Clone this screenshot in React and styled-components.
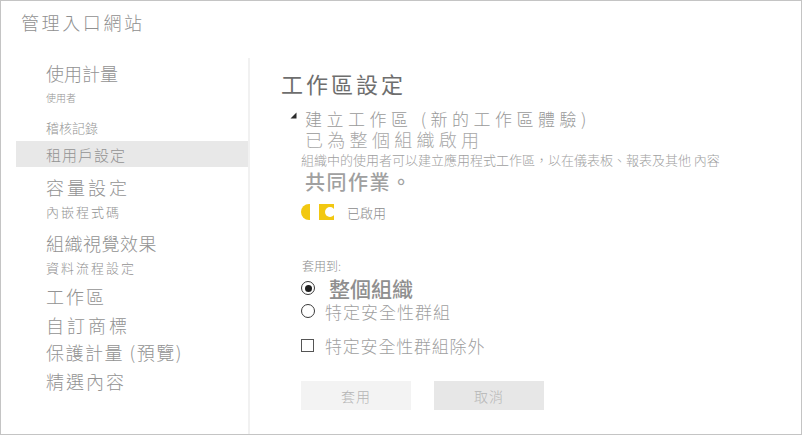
import React from "react";
import styled, { createGlobalStyle } from "styled-components";

const Global = createGlobalStyle`
  html, body { margin: 0; padding: 0; background: #fff; }
  body { font-family: "Noto Sans CJK TC", "Noto Sans", sans-serif; }
  * { box-sizing: border-box; }
`;

const Frame = styled.div`
  width: 802px;
  height: 435px;
  border: 1px solid #c4c4c4;
  display: flex;
  flex-direction: column;
  background: #fff;
  overflow: hidden;
`;

const Header = styled.header`
  height: 57px;
  padding: 8px 0 0 20px;
  font-size: 18px;
  line-height: 26px;
  letter-spacing: 2.6px;
  color: #909090;
  font-weight: 300;
`;

const Body = styled.div`
  flex: 1;
  display: flex;
  min-height: 0;
`;

const Sidebar = styled.nav`
  width: 249px;
  flex: none;
  border-right: 2px solid #f1f1f1;
  padding-left: 15px;
  display: flex;
  flex-direction: column;
`;

const NavItem = styled.div`
  height: ${(p) => p.$h}px;
  margin-top: ${(p) => p.$mt || 0}px;
  display: flex;
  align-items: center;
  padding-left: 30px;
  font-size: ${(p) => p.$size}px;
  letter-spacing: ${(p) => p.$ls || 0}px;
  color: #939393;
  white-space: nowrap;
  font-weight: 300;
  background: ${(p) => (p.$active ? "#e8e8e8" : "transparent")};
`;

const Main = styled.main`
  flex: 1;
  padding-left: 31px;
  display: flex;
  flex-direction: column;
  white-space: nowrap;
`;

const Heading = styled.h1`
  margin: 11px 0 0;
  font-size: 22px;
  line-height: 28px;
  letter-spacing: 3px;
  font-weight: 400;
  color: #6e6e6e;
`;

const SectionRow = styled.div`
  margin-top: 10px;
  display: flex;
  align-items: flex-start;
`;

const Caret = styled.svg`
  width: 24px;
  flex: none;
  margin-top: 5px;
  padding-left: 1px;
`;

const Line = styled.div`
  padding-left: ${(p) => p.$indent || 0}px;
  margin-top: ${(p) => p.$mt || 0}px;
  height: ${(p) => p.$h}px;
  line-height: ${(p) => p.$h}px;
  font-size: ${(p) => p.$size}px;
  letter-spacing: ${(p) => p.$ls || 0}px;
  font-weight: ${(p) => p.$weight || 300};
  color: ${(p) => p.$color || "#a0a0a0"};
`;

const ToggleRow = styled.div`
  margin-top: 9px;
  height: 24px;
  padding-left: 20px;
  display: flex;
  align-items: center;
  gap: 13px;
  font-size: 13px;
  font-weight: 300;
  color: #8c8c8c;
`;

const OptionRow = styled.label`
  margin-top: ${(p) => p.$mt || 0}px;
  height: ${(p) => p.$h}px;
  padding-left: 20px;
  display: flex;
  align-items: center;
  gap: ${(p) => p.$gap}px;
  font-size: ${(p) => p.$size}px;
  letter-spacing: ${(p) => p.$ls || 0}px;
  font-weight: ${(p) => p.$weight || 300};
  color: ${(p) => p.$color || "#999"};
`;

const Radio = styled.span`
  width: 14px;
  height: 14px;
  flex: none;
  border-radius: 50%;
  border: 1px solid #3a3a3a;
  display: flex;
  align-items: center;
  justify-content: center;
  &::after {
    content: "";
    width: 7px;
    height: 7px;
    border-radius: 50%;
    background: ${(p) => (p.$checked ? "#1f1f1f" : "transparent")};
  }
`;

const Check = styled.span`
  width: 13px;
  height: 13px;
  flex: none;
  border: 1px solid #555;
`;

const Buttons = styled.div`
  margin-top: 25px;
  padding-left: 20px;
  display: flex;
  gap: 23px;
`;

const Button = styled.button`
  width: 110px;
  height: 29px;
  border: none;
  background: ${(p) => (p.$secondary ? "#e7e7e7" : "#f3f3f3")};
  color: #b5b5b5;
  font-family: inherit;
  font-size: 14px;
  font-weight: 300;
  letter-spacing: 1px;
  padding: 0;
`;

const nav = [
  { t: "使用計量", s: 18, h: 30 },
  { t: "使用者", s: 10, h: 18 },
  { t: "稽核記錄", s: 13, h: 28, mt: 7 },
  { t: "租用戶設定", s: 15, ls: 1, h: 26, active: true },
  { t: "容量設定", s: 18, ls: 3, h: 26, mt: 7 },
  { t: "內嵌程式碼", s: 13, ls: 2, h: 22 },
  { t: "組織視覺效果", s: 18, ls: 0.5, h: 30, mt: 6 },
  { t: "資料流程設定", s: 13, ls: 2, h: 18 },
  { t: "工作區", s: 18, ls: 2, h: 28, mt: 6 },
  { t: "自訂商標", s: 18, ls: 3, h: 30 },
  { t: "保護計量 (預覽)", s: 18, ls: 1.5, h: 24 },
  { t: "精選內容", s: 18, ls: 2, h: 30, mt: 2 },
];

export default function App() {
  return (
    <>
      <Global />
      <Frame>
        <Header>管理入口網站</Header>
        <Body>
          <Sidebar>
            {nav.map((n) => (
              <NavItem
                key={n.t}
                $size={n.s}
                $ls={n.ls}
                $h={n.h}
                $mt={n.mt}
                $active={n.active}
              >
                {n.t}
              </NavItem>
            ))}
          </Sidebar>
          <Main>
            <Heading>工作區設定</Heading>
            <SectionRow>
              <Caret height="7" viewBox="0 0 7 7">
                <polygon points="6.5,0.5 6.5,6.5 0.5,6.5" fill="#2b2b2b" />
              </Caret>
              <Line $h={24} $size={17} $ls={4.5} $color="#9a9a9a">
                建立工作區 (新的工作區體驗)
              </Line>
            </SectionRow>
            <Line $indent={24} $h={16} $size={18} $ls={4.3} $color="#a8a8a8">
              已為整個組織啟用
            </Line>
            <Line $indent={20} $h={26} $size={13} $color="#a0a0a0">
              組織中的使用者可以建立應用程式工作區，以在儀表板、報表及其他 內容
            </Line>
            <Line $indent={24} $h={18} $size={20} $ls={1.5} $weight={500} $color="#a0a0a0">
              共同作業。
            </Line>
            <ToggleRow>
              <svg width="33" height="16" viewBox="0 0 33 16">
                <path d="M9 0 H8 A8 8 0 0 0 8 16 H9 Z" fill="#f2c811" />
                <rect x="18" y="0" width="15" height="16" fill="#f2c811" />
                <circle cx="29" cy="8" r="5" fill="#fff" />
              </svg>
              已啟用
            </ToggleRow>
            <Line $indent={21} $mt={32} $h={20} $size={12} $color="#8c8c8c">
              套用到:
            </Line>
            <OptionRow $h={24} $gap={14} $size={21} $weight={500} $color="#8f8f8f">
              <Radio $checked />
              整個組織
            </OptionRow>
            <OptionRow $h={22} $gap={10} $size={17} $ls={1} $color="#9f9f9f">
              <Radio />
              特定安全性群組
            </OptionRow>
            <OptionRow $mt={12} $h={22} $gap={11} $size={17} $ls={0.8} $color="#9f9f9f">
              <Check />
              特定安全性群組除外
            </OptionRow>
            <Buttons>
              <Button>套用</Button>
              <Button $secondary>取消</Button>
            </Buttons>
          </Main>
        </Body>
      </Frame>
    </>
  );
}
